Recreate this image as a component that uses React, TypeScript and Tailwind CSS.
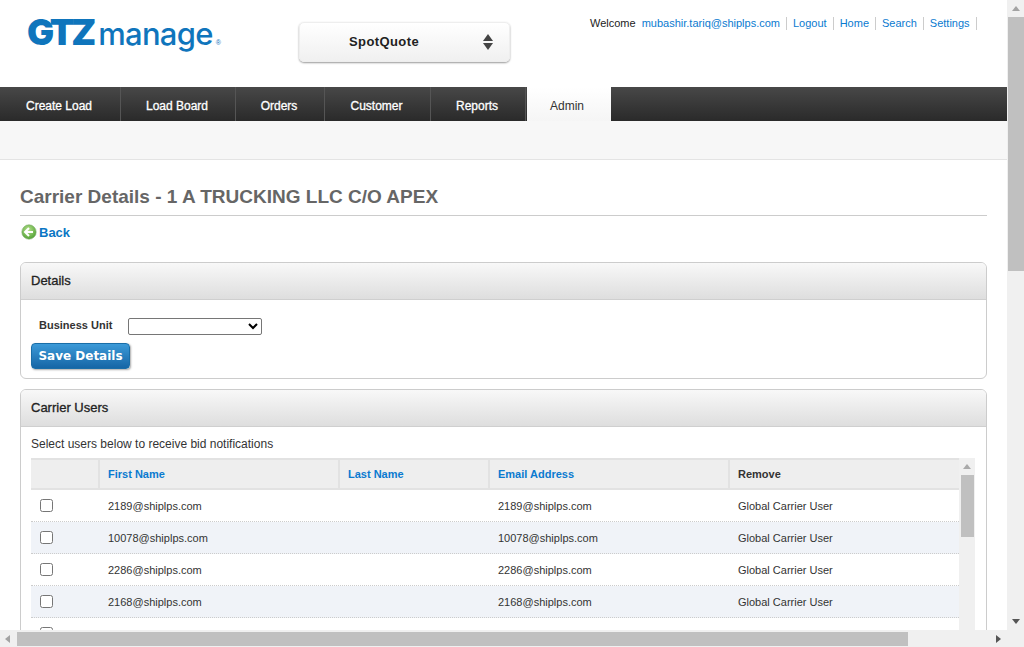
import React from "react";

const navItems = [
  { label: "Create Load", width: "w-[120px]" },
  { label: "Load Board", width: "w-[114px]" },
  { label: "Orders", width: "w-[88px]" },
  { label: "Customer", width: "w-[105px]" },
  { label: "Reports", width: "w-[94px]" },
];

const topLinks = ["Logout", "Home", "Search", "Settings"];

const users = ["2189@shiplps.com", "10078@shiplps.com", "2286@shiplps.com", "2168@shiplps.com", ""];

const Arrow = ({ dir, className }: { dir: "up" | "down" | "left" | "right"; className: string }) => {
  const points = {
    up: "4,1 8,6 0,6",
    down: "0,1 8,1 4,6",
    left: "6,0 6,8 1,4",
    right: "1,0 1,8 6,4",
  }[dir];
  return (
    <svg width="8" height="8" viewBox="0 0 8 8" className={className}>
      <polygon points={points} fill="currentColor" />
    </svg>
  );
};

const PanelHeader = ({ title }: { title: string }) => (
  <div className="h-[37px] flex items-center px-[10px] rounded-t-[5px] border-b border-[#cfcfcf] bg-gradient-to-b from-[#f8f8f8] to-[#dedede] text-[13px] text-[#222] [-webkit-text-stroke:0.3px_#222]">
    {title}
  </div>
);

export default function App() {
  return (
    <div className="w-[1024px] h-[647px] overflow-hidden flex flex-col bg-white font-['Liberation_Sans',Arial,sans-serif]">
      <div className="flex h-[630px]">
        <div className="w-[1007px] h-[630px] overflow-hidden">
          {/* header */}
          <div className="h-[87px] flex items-start">
            <div className="w-[299px] pl-[27px] pt-[8px] flex items-baseline text-[#0f75bc] leading-[48px]">
              <span className="font-['Inter',sans-serif] font-black text-[36px] tracking-[-3.2px]">GTZ</span>
              <span className="ml-[5px] font-['Inter',sans-serif] font-medium text-[31px] tracking-[-0.7px]">manage</span>
              <span className="ml-[3px] text-[7px]">®</span>
            </div>
            <div className="mt-[22px] w-[211px] h-[40px] rounded-[5px] border border-[#eee] shadow-[0_1px_2px_#999] bg-gradient-to-b from-white to-[#f0f0f0] flex items-center pl-[49px] pr-[16px] justify-between">
              <span className="text-[13px] font-bold text-[#222] tracking-[0.4px]">SpotQuote</span>
              <span className="flex flex-col gap-[2px] text-[#444]">
                <svg width="10" height="7" viewBox="0 0 10 7"><polygon points="5,0 10,7 0,7" fill="currentColor" /></svg>
                <svg width="10" height="7" viewBox="0 0 10 7"><polygon points="0,0 10,0 5,7" fill="currentColor" /></svg>
              </span>
            </div>
            <div className="ml-[80px] mt-[17px] flex items-center text-[11px] leading-[13px]">
              <span className="text-[#222]">Welcome</span>
              <a className="ml-[6px] pr-[6px] border-r border-[#ccc] text-[#0a7ad0]">mubashir.tariq@shiplps.com</a>
              {topLinks.map((link) => (
                <a key={link} className="pl-[6px] pr-[6px] border-r border-[#ccc] text-[#0a7ad0]">
                  {link}
                </a>
              ))}
            </div>
          </div>

          {/* nav */}
          <div className="h-[34px] flex bg-gradient-to-b from-[#484848] to-[#2a2a2a]">
            {navItems.map((item) => (
              <div
                key={item.label}
                className={`${item.width} border-r border-[#555] box-content flex items-center justify-center text-[12px] text-white [-webkit-text-stroke:0.3px_#fff]`}
              >
                <span className="mr-[2px] mt-[3px]">{item.label}</span>
              </div>
            ))}
            <div className="ml-[1px] w-[84px] bg-gradient-to-b from-white to-[#f5f5f5] flex items-center justify-center text-[12px] text-[#333]">
              <span className="mr-[4px] mt-[3px]">Admin</span>
            </div>
          </div>
          <div className="h-[39px] bg-[#f7f7f7] border-b border-[#e4e4e4]"></div>

          {/* content */}
          <div className="pl-[20px] pr-[20px]">
            <h1 className="mt-[26px] h-[30px] border-b border-[#ccc] text-[19px] leading-[21px] font-bold text-[#666]">
              Carrier Details - 1 A TRUCKING LLC C/O APEX
            </h1>
            <div className="mt-[8px] h-[16px] flex items-center gap-[2px] text-[13px] font-bold text-[#0a76c4]">
              <svg width="16" height="16" viewBox="0 0 16 16" className="ml-[1px]">
                <defs>
                  <radialGradient id="backDot" cx="45%" cy="35%" r="70%">
                    <stop offset="0%" stopColor="#b8e28e" />
                    <stop offset="100%" stopColor="#4a9d2e" />
                  </radialGradient>
                </defs>
                <circle cx="8" cy="8" r="7.2" fill="url(#backDot)" stroke="#7fae6c" strokeWidth="0.6" />
                <path d="M8 4 L4 8 L8 12 M4.5 8 H12" fill="none" stroke="#fff" strokeWidth="2" />
              </svg>
              <span className="pt-[1px]">Back</span>
            </div>

            <div className="mt-[22px] h-[117px] border border-[#ccc] rounded-[6px]">
              <PanelHeader title="Details" />
              <div className="pl-[10px] pt-[17px]">
                <div className="flex items-center h-[18px]">
                  <label className="ml-[8px] w-[89px] pb-[2px] text-[11px] font-bold text-[#333]">Business Unit</label>
                  <select className="w-[134px] h-[17px] border border-[#767676] rounded-[2px] bg-white text-[11px] appearance-auto"></select>
                </div>
                <button className="mt-[8px] w-[99px] h-[26px] rounded-[4px] border border-[#1a6ea8] bg-gradient-to-b from-[#3c9ad8] to-[#1566a6] shadow-[1px_1px_2px_#aaa] text-white text-[12px] font-bold font-['DejaVu_Sans',sans-serif]">
                  Save Details
                </button>
              </div>
            </div>

            <div className="mt-[10px] border border-[#ccc] rounded-t-[6px]">
              <PanelHeader title="Carrier Users" />
              <p className="ml-[10px] mt-[10px] text-[12px] leading-[14px] text-[#333]">Select users below to receive bid notifications</p>
              <div className="ml-[10px] mt-[7px] w-[944px] flex">
                <div className="w-[928px]">
                  <div className="h-[32px] flex bg-[#eee] border-y-2 border-[#e2e2e2] text-[11px] font-bold">
                    <div className="w-[69px] border-r-2 border-[#e2e2e2]"></div>
                    <div className="w-[240px] pl-[8px] border-r-2 border-[#e2e2e2] flex items-center text-[#0a7ad0]">First Name</div>
                    <div className="w-[150px] pl-[8px] border-r-2 border-[#e2e2e2] flex items-center text-[#0a7ad0]">Last Name</div>
                    <div className="w-[240px] pl-[8px] border-r-2 border-[#e2e2e2] flex items-center text-[#0a7ad0]">Email Address</div>
                    <div className="flex-1 pl-[8px] flex items-center text-[#333]">Remove</div>
                  </div>
                  {users.map((user, i) => (
                    <div
                      key={i}
                      className={`h-[32px] flex items-center border-b border-dotted border-[#ccc] text-[11px] text-[#333] ${i % 2 === 1 ? "bg-[#f0f3f8]" : "bg-white"}`}
                    >
                      <div className="w-[69px] pl-[9px] flex items-center">
                        <input type="checkbox" className="w-[13px] h-[13px] m-0" />
                      </div>
                      <div className="w-[398px] pl-[8px] pt-[1px]">{user}</div>
                      <div className="w-[240px] pt-[1px]">{user}</div>
                      <div className="flex-1 pt-[1px]">{user && "Global Carrier User"}</div>
                    </div>
                  ))}
                </div>
                <div className="w-[16px] bg-[#f0f0f0] flex flex-col items-center">
                  <Arrow dir="up" className="mt-[5px] text-[#aaa]" />
                  <div className="mt-[4px] ml-[1px] w-[13px] h-[62px] bg-[#c0c0c0]"></div>
                </div>
              </div>
            </div>
          </div>
        </div>

        {/* page vertical scrollbar */}
        <div className="w-[17px] bg-[#f0f0f0] flex flex-col items-center justify-between">
          <div className="w-full flex flex-col items-center">
            <Arrow dir="up" className="mt-[5px] mb-[4px] text-[#a3a3a3]" />
            <div className="w-full ml-[1px] h-[254px] bg-[#c0c0c0]"></div>
          </div>
          <Arrow dir="down" className="mb-[4px] text-[#555]" />
        </div>
      </div>

      {/* page horizontal scrollbar */}
      <div className="h-[17px] bg-[#f0f0f0] flex items-center">
        <Arrow dir="left" className="ml-[4px] text-[#a3a3a3]" />
        <div className="ml-[5px] w-[891px] h-[14px] bg-[#c0c0c0]"></div>
        <Arrow dir="right" className="ml-[87px] text-[#555]" />
      </div>
    </div>
  );
}
